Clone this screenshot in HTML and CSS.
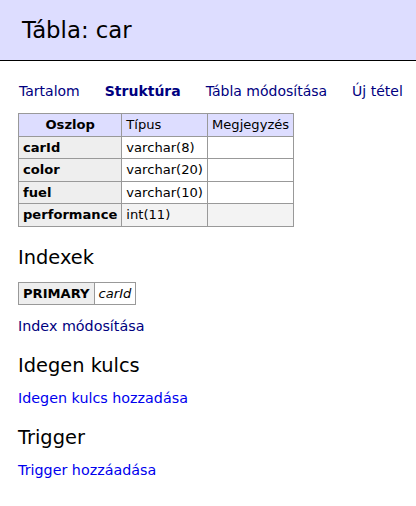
FILE: index.html
```html
<!DOCTYPE html>
<html lang="hu">
<head>
<meta charset="utf-8">
<title>Tábla: car</title>
<link rel="stylesheet" href="styles.css">
</head>
<body>
<h2 class="title">Tábla: car</h2>
<div class="content">
  <nav class="tabs">
    <a class="visited" href="#">Tartalom</a>
    <a class="visited active" href="#">Struktúra</a>
    <a class="visited" href="#">Tábla módosítása</a>
    <a class="visited" href="#">Új tétel</a>
  </nav>
  <table class="grid">
    <thead>
      <tr><th class="head">Oszlop</th><td class="head">Típus</td><td class="head">Megjegyzés</td></tr>
    </thead>
    <tbody>
      <tr><th>carId</th><td>varchar(8)</td><td></td></tr>
      <tr><th>color</th><td>varchar(20)</td><td></td></tr>
      <tr><th>fuel</th><td>varchar(10)</td><td></td></tr>
      <tr class="hover"><th>performance</th><td>int(11)</td><td></td></tr>
    </tbody>
  </table>

  <h3 class="section">Indexek</h3>
  <table class="grid">
    <tbody>
      <tr><th>PRIMARY</th><td><i>carId</i></td></tr>
    </tbody>
  </table>
  <p class="link-line"><a class="visited" href="#">Index módosítása</a></p>

  <h3 class="section">Idegen kulcs</h3>
  <p class="link-line"><a class="fresh" href="#">Idegen kulcs hozzadása</a></p>

  <h3 class="section">Trigger</h3>
  <p class="link-line"><a class="fresh" href="#">Trigger hozzáadása</a></p>
</div>
</body>
</html>
```

FILE: styles.css
```css
body {
  margin: 0;
  font-family: "DejaVu Sans", Verdana, sans-serif;
  font-size: 13px;
  color: #000;
  background: #fff;
  overflow: hidden;
}
a { text-decoration: none; }
a.visited { color: #000080; }
a.fresh { color: #0000ee; }
.title {
  margin: 0;
  background: #ddf;
  border-bottom: 1px solid #000;
  font-size: 22.8px;
  font-weight: normal;
  line-height: 26px;
  padding: 17px 22px;
}
.content { padding: 0 18px; }
.tabs {
  display: flex;
  gap: 25px;
  margin: 22px 0 13px 1px;
  font-size: 14px;
  line-height: 17px;
  white-space: nowrap;
}
.tabs a { flex-shrink: 0; }
.tabs .active { font-weight: bold; }
.grid {
  border-collapse: collapse;
  font-size: 13.1px;
  line-height: 16px;
}
.grid th, .grid td {
  border: 1px solid #999;
  padding: 3px 4px 2.5px 4px;
  text-align: left;
}
.grid th { background: #eee; font-weight: bold; }
.grid td { background: #fff; }
.grid .head { background: #ddf; font-weight: normal; }
.grid th.head { text-align: center; font-weight: bold; }
.grid tr.hover td { background: #f3f3f3; }
.section {
  font-size: 19.4px;
  font-weight: normal;
  line-height: 22px;
  margin: 20px 0 13px;
}
.link-line {
  margin: 13px 0;
  font-size: 14.3px;
  line-height: 17px;
}
```
